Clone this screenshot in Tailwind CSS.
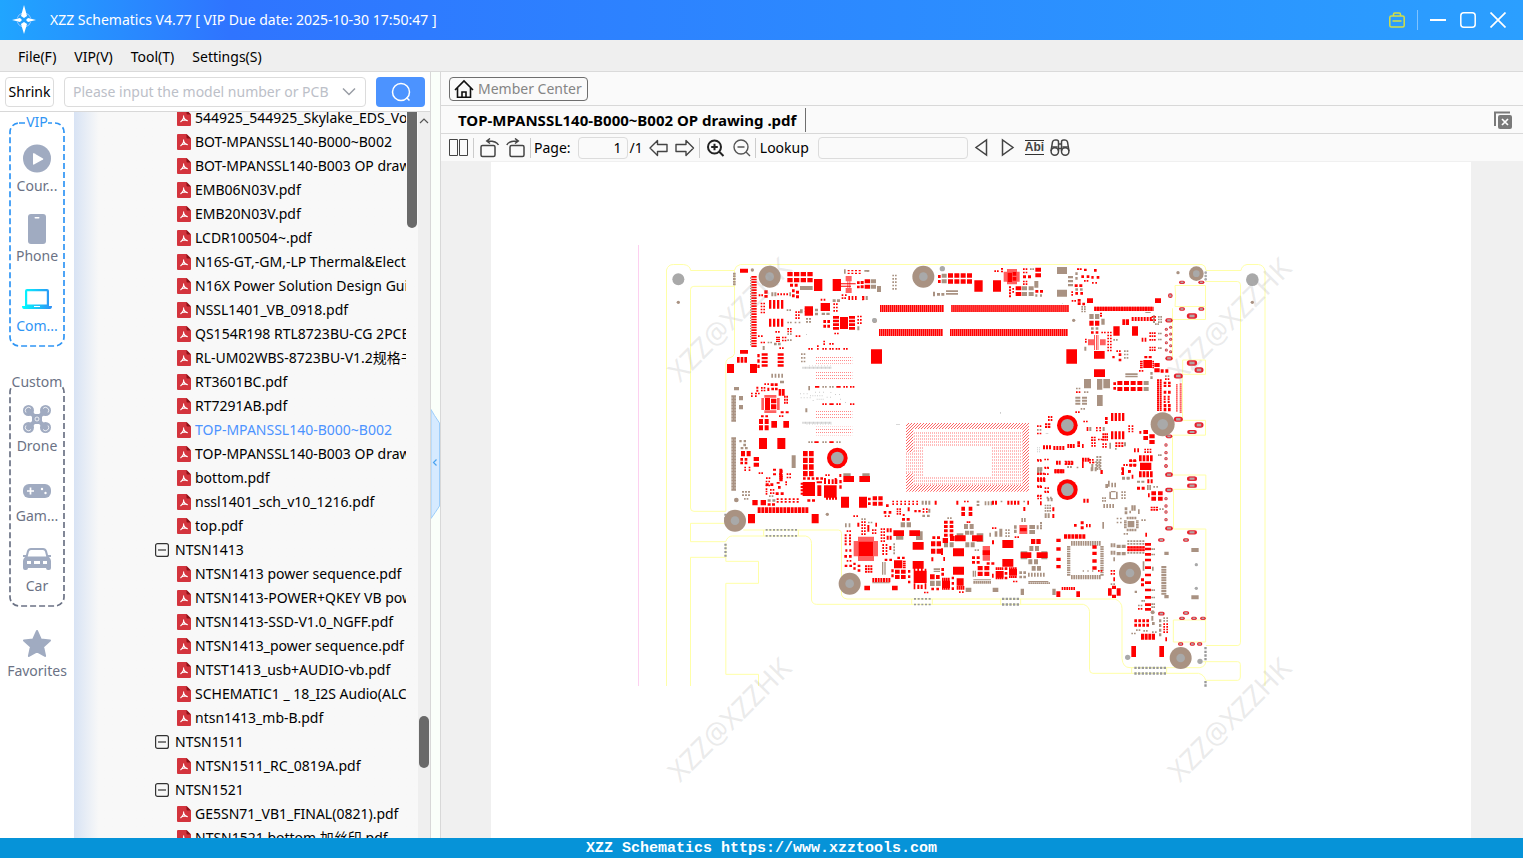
<!DOCTYPE html>
<html lang="en">
<head>
  <meta charset="UTF-8">
  <meta name="viewport" content="width=device-width, initial-scale=1.0">
  <title>XZZ Schematics</title>
  <script src="https://cdn.jsdelivr.net/npm/@tailwindcss/browser@4"></script>
</head>
<body class="h-screen flex flex-col overflow-hidden bg-[#f0f0f0] text-black text-sm leading-5 font-['Noto_Sans','Noto_Sans_CJK_SC',sans-serif]">

  <!-- Title bar -->
  <header class="h-10 shrink-0 flex items-center pl-3 pr-[15px] text-white bg-linear-to-r from-[#20a5ff] via-[#2f74ff] via-15% to-[#2b9fff]">
    <svg class="w-6 h-8" viewBox="0 0 24 32" fill="#fff">
      <circle cx="12" cy="16" r="7" fill="none" stroke="#8fc4ff" stroke-width="1" stroke-dasharray="7 4" stroke-dashoffset="-2"/>
      <path d="M12 1l3 11-3 2-3-2zM12 30l3-10-3-2-3 2zM0 16l8-2 2 2-2 2zM24 16l-8-2-2 2 2 2z"/>
    </svg>
    <h1 class="ml-3.5">XZZ Schematics V4.77 [ VIP Due date: 2025-10-30 17:50:47 ]</h1>
    <div class="ml-auto flex items-center">
      <button aria-label="Toolbox">
        <svg class="w-4 h-4" viewBox="0 0 16 16" fill="none" stroke="#d3df45" stroke-width="1.5"><rect x=".8" y="4" width="14.4" height="11" rx="1.5"/><path d="M4.500 4V2.200Q4.500 1 5.700 1h4.600Q11.500 1 11.500 2.200V4M3.500 9h9"/></svg>
      </button>
      <span class="w-px h-5 bg-white/40 ml-3 mr-3"></span>
      <button aria-label="Minimize"><svg class="w-4 h-4" viewBox="0 0 16 16" stroke="#fff" stroke-width="2"><path d="M0 8h16"/></svg></button>
      <button aria-label="Maximize" class="ml-3.5"><svg class="w-4 h-4" viewBox="0 0 16 16" fill="none" stroke="#fff" stroke-width="1.5"><rect x=".8" y=".8" width="14.400" height="14.400" rx="3"/></svg></button>
      <button aria-label="Close" class="ml-3.5 mr-0.5"><svg class="w-4 h-4" viewBox="0 0 16 16" stroke="#fff" stroke-width="1.700"><path d="M.5.5l15 15M15.500.5l-15 15"/></svg></button>
    </div>
  </header>

  <!-- Menu -->
  <nav class="h-8 shrink-0 flex items-center gap-[18px] px-4.5 pt-0.5 bg-[#efefef] border-b border-[#dadada]">
    <button>File(F)</button>
    <button>VIP(V)</button>
    <button>Tool(T)</button>
    <button>Settings(S)</button>
  </nav>

  <div class="flex-1 min-h-0 flex">

    <!-- Left panel -->
    <aside class="w-[431px] shrink-0 flex flex-col bg-white border-r border-[#d8d8d8]">
      <div class="h-10 shrink-0 flex items-center px-[5px] border-b border-[#d8d8d8]">
        <button class="w-[49px] h-[30px] border border-[#dcdcdc] rounded whitespace-nowrap">Shrink</button>
        <div class="ml-2.5 w-[302px] h-[30px] flex items-center border border-[#dcdcdc] rounded pl-2 pr-2">
          <input aria-label="Model number" class="flex-1 min-w-0 outline-none placeholder:text-[#bcc0c8]" placeholder="Please input the model number or PCB">
          <svg class="w-4 h-4" viewBox="0 0 16 16" fill="none" stroke="#999da5" stroke-width="1.500"><path d="M2 4.500l6 6 6-6"/></svg>
        </div>
        <button aria-label="Search" class="ml-2.5 flex-1 h-[30px] rounded bg-[#4c93ff] flex items-center justify-center">
          <svg class="w-5 h-5" viewBox="0 0 20 20" fill="none" stroke="#fff" stroke-width="1.500"><circle cx="10" cy="10" r="8.500"/><path d="M15.500 15.500l3 3"/></svg>
        </button>
      </div>

      <div class="flex-1 min-h-0 flex">
        <!-- Categories -->
        <div class="w-[74px] shrink-0 pt-2.5 px-[9px] text-[#6b7285]">
          <section class="relative pt-[22px] pb-[11px] flex flex-col gap-[18px]">
            <svg class="absolute inset-0 w-full h-full" fill="none" stroke="#2f95f5" stroke-width="1.700" stroke-dasharray="6 3"><rect x="1" y="1" rx="9" class="w-[calc(100%-2px)] h-[calc(100%-2px)]"/></svg>
            <h2 class="absolute -top-2.5 inset-x-0 flex justify-center text-[#2f95f5]"><span class="bg-white">VIP</span></h2>
            <button class="relative flex flex-col items-center gap-0.5">
              <svg class="w-[30px] h-[30px]" viewBox="0 0 30 30"><circle cx="15" cy="14.500" r="14" fill="#a0abc1"/><path d="M11 9.500v10.500q0 1 1 .5l9-5q.8-.5 0-1l-9-5.300q-1-.5-1 .3z" fill="#fff"/></svg>
              <span>Cour...</span>
            </button>
            <button class="relative flex flex-col items-center gap-0.5">
              <svg class="w-[30px] h-[30px]" viewBox="0 0 30 30"><rect x="6" width="18" height="30" rx="3" fill="#a0abc1"/><rect x="12.500" y="3" width="5" height="1.500" rx=".7" fill="#fff"/></svg>
              <span>Phone</span>
            </button>
            <button class="relative flex flex-col items-center gap-0.5 text-[#2f95f5]">
              <svg class="w-[30px] h-[30px]" viewBox="0 0 30 30"><defs><linearGradient id="lap"><stop stop-color="#0ff"/><stop offset="1" stop-color="#2f8ef5"/></linearGradient></defs><path fill="url(#lap)" fill-rule="evenodd" d="M3 7Q3 5 5 5h20q2 0 2 2v15h3q0 3-2 3H2q-2 0-2-3h3zM5.200 7.200V20.500h19.600V7.200zM12 22v1h6v-1z"/></svg>
              <span>Com...</span>
            </button>
          </section>

          <section class="relative mt-[35px] pt-[22px] pb-[11px] flex flex-col gap-[18px]">
            <svg class="absolute inset-0 w-full h-full" fill="none" stroke="#6b7285" stroke-width="1.700" stroke-dasharray="6 3"><rect x="1" y="1" rx="9" class="w-[calc(100%-2px)] h-[calc(100%-2px)]"/></svg>
            <h2 class="absolute -top-2.5 inset-x-0 flex justify-center"><span class="bg-white">Custom</span></h2>
            <button class="relative flex flex-col items-center gap-0.5">
              <svg class="w-[30px] h-[30px]" viewBox="0 0 30 30">
                <g fill="#a0abc1"><circle cx="6.500" cy="6.500" r="5.500"/><circle cx="23.500" cy="6.500" r="5.500"/><circle cx="6.500" cy="23.500" r="5.500"/><circle cx="23.500" cy="23.500" r="5.500"/><rect x="10" y="10" width="10" height="10" rx="3"/></g>
                <path d="M6 6l18 18M24 6L6 24" stroke="#a0abc1" stroke-width="4"/>
                <g fill="none" stroke="#fff" stroke-width=".8"><circle cx="15" cy="15" r="2"/><path d="M4 8.500A3.200 3.200 0 1 1 9 4.500M21 4.500a3.200 3.200 0 1 1 5 4M4 21.500a3.200 3.200 0 1 0 5 4M26 21.500a3.200 3.200 0 1 1-5 4"/></g>
              </svg>
              <span>Drone</span>
            </button>
            <button class="relative flex flex-col items-center gap-0.5">
              <svg class="w-[30px] h-[30px]" viewBox="0 0 30 30"><rect x="1" y="10" width="28" height="14" rx="6" fill="#a0abc1"/><path d="M5 17h7M8.500 13.500v7" stroke="#fff" stroke-width="1.700"/><circle cx="20" cy="15" r="1.200" fill="#fff"/><circle cx="23.500" cy="19" r="1.200" fill="#fff"/></svg>
              <span>Gam...</span>
            </button>
            <button class="relative flex flex-col items-center gap-0.5">
              <svg class="w-[30px] h-[30px]" viewBox="0 0 30 30"><path fill="#a0abc1" fill-rule="evenodd" d="M9 4h12q3 0 4 3l1 4h3v2h-2q2 2 2 4v7q0 2-2 2h-1q-2 0-2-2H6q0 2-2 2H3q-2 0-2-2v-7q0-2 2-4H1v-2h3l1-4q1-3 4-3zM9 6Q7.500 6 7 7.500L5.700 12.500h18.600L23 7.500Q22.500 6 21 6zM5 17v3h4v-3zM12 17v3h6v-3zM21 17v3h4v-3z"/></svg>
              <span>Car</span>
            </button>
          </section>

          <button class="w-full mt-[22px] flex flex-col items-center gap-0.5">
            <svg class="w-[30px] h-[30px]" viewBox="0 0 30 30"><path fill="#a0abc1" stroke="#a0abc1" stroke-width="2" stroke-linejoin="round" d="M15 2l3.800 8.500 9.200 1-6.900 6.200 2 9.300-8.100-4.700L6.900 27l2-9.300L2 11.500l9.200-1z"/></svg>
            <span>Favorites</span>
          </button>
        </div>

        <!-- File tree -->
        <div class="flex-1 min-w-0 flex overflow-hidden bg-linear-to-r from-[#d8e3f4] to-[#f8f8f8] to-7%">
          <ul id="tree" class="w-[332px] shrink-0 -mt-1.5 overflow-hidden"></ul>
          <div class="w-3 shrink-0 px-px"><div class="h-[116px] rounded-b-full bg-[#696969]"></div></div>
          <div class="flex-1 bg-[#efefef] flex flex-col items-center">
            <svg class="w-3 h-4" viewBox="0 0 12 16" fill="none" stroke="#555" stroke-width="1.200"><path d="M2 11l4-4 4 4"/></svg>
            <div class="flex-1"></div>
            <div class="w-2.5 h-[52px] rounded-full bg-[#696969] mb-[70px]"></div>
          </div>
        </div>
      </div>
    </aside>

    <!-- Splitter -->
    <div class="relative w-2.5 shrink-0 bg-[#fafffa] border-r border-[#d8d8d8]">
      <button aria-label="Collapse panel" class="absolute left-0 top-[337px]">
        <svg class="w-[9px] h-[110px]" viewBox="0 0 9 110"><path d="M0 .5Q3 6 8.500 14v83Q4 104 0 109.500z" fill="#d6eaff" stroke="#9ccdfa"/><path d="M5.500 50.500l-3 3 3 3" fill="none" stroke="#4aa3f0" stroke-width="1.200"/></svg>
      </button>
    </div>

    <!-- Viewer -->
    <main class="flex-1 min-w-0 flex flex-col bg-[#fafafa]">
      <div class="h-[34px] shrink-0 flex items-center px-2 border-b border-[#d8d8d8]">
        <button class="h-6 flex items-center gap-1 pl-1 pr-[5px] border border-[#6e6e6e] rounded text-[#858585]">
          <svg class="w-5 h-5" viewBox="0 0 20 20" fill="none" stroke="#111" stroke-width="1.600"><path d="M1 11L10 2l9 9M3.500 9v9.200h13V9M8 18v-5h4v5"/></svg>
          Member Center
        </button>
      </div>
      <div class="h-7 shrink-0 flex items-center justify-between pl-[17px] pr-2.5 border-b border-[#d8d8d8]">
        <button class="h-6 pr-[9px] border-r border-[#6e6e6e] text-[15px] font-bold">TOP-MPANSSL140-B000~B002 OP drawing .pdf</button>
        <button aria-label="Close all">
          <svg class="w-5 h-5" viewBox="0 0 20 20"><path d="M2 16V2.500h15" fill="none" stroke="#7a7a7a" stroke-width="2"/><rect x="5" y="5" width="14" height="14" rx="2" fill="#7a7a7a"/><path d="M9 9l6 6M15 9l-6 6" stroke="#fff" stroke-width="1.700"/></svg>
        </button>
      </div>
      <div class="h-[27px] shrink-0 flex items-center pl-2">
        <button aria-label="Two pages"><svg class="w-5 h-5" viewBox="0 0 20 20" fill="none" stroke="#444"><path d="M.5 1.500h8v16h-8zM10.500 1.500h8v16h-8z"/></svg></button>
        <span class="w-px h-5 bg-[#ccc] mx-1"></span>
        <button aria-label="Rotate left" class="ml-0.5"><svg class="w-5 h-5" viewBox="0 0 20 20" fill="none" stroke="#444" stroke-width="1.500"><rect x="1" y="7.500" width="14" height="11" rx="1.500"/><path d="M18.500 7Q16 2.500 7 3M10 .5L6.800 3 10 5.500"/></svg></button>
        <button aria-label="Rotate right" class="ml-1.5"><svg class="w-5 h-5" viewBox="0 0 20 20" fill="none" stroke="#444" stroke-width="1.500"><rect x="4" y="7.500" width="14" height="11" rx="1.500"/><path d="M.8 7Q3 2.500 12 3M9 .5L12.300 3 9 5.500"/></svg></button>
        <span class="w-px h-5 bg-[#ccc] ml-1 mr-[3px]"></span>
        <label for="page">Page:</label>
        <input id="page" value="1" class="ml-[7px] w-[50px] h-[22px] border border-[#dcdcdc] rounded-sm text-right px-[5px]">
        <span class="ml-0.5">/1</span>
        <button aria-label="Previous page" class="ml-1.5"><svg class="w-5 h-5" viewBox="0 0 20 20" fill="none" stroke="#444" stroke-width="1.400" stroke-linejoin="round"><path d="M1 10l7.500-7.500v4H18v7H8.500v4z"/></svg></button>
        <button aria-label="Next page" class="ml-1.5"><svg class="w-5 h-5" viewBox="0 0 20 20" fill="none" stroke="#444" stroke-width="1.400" stroke-linejoin="round"><path d="M18.500 10L11 2.500v4H1v7h10v4z"/></svg></button>
        <span class="w-px h-5 bg-[#ccc] ml-1 mr-1.5"></span>
        <button aria-label="Zoom in"><svg class="w-5 h-5" viewBox="0 0 20 20" fill="none" stroke="#222" stroke-width="2"><circle cx="8.500" cy="9" r="6.500"/><path d="M13 13.500l4.500 4.500M5.200 9h6.600M8.500 5.700v6.600"/></svg></button>
        <button aria-label="Zoom out" class="ml-1.5"><svg class="w-5 h-5" viewBox="0 0 20 20" fill="none" stroke="#555" stroke-width="1.400"><circle cx="9" cy="9" r="7"/><path d="M14 14l4 4M5.500 9h7"/></svg></button>
        <span class="w-px h-5 bg-[#ccc] ml-[3px] mr-1"></span>
        <label for="lookup">Lookup</label>
        <input id="lookup" class="ml-[9px] w-[150px] h-[22px] border border-[#dcdcdc] rounded-sm px-1">
        <button aria-label="Find previous" class="ml-1"><svg class="w-5 h-5" viewBox="0 0 20 20" fill="none" stroke="#444" stroke-width="1.500"><path d="M14.500 2v15L4 9.500z"/></svg></button>
        <button aria-label="Find next" class="ml-1.5"><svg class="w-5 h-5" viewBox="0 0 20 20" fill="none" stroke="#444" stroke-width="1.500"><path d="M4.500 2v15L15 9.500z"/></svg></button>
        <button class="ml-[7px] border-y border-[#333] text-xs leading-[13px] font-bold text-[#444] font-['Liberation_Sans',sans-serif]">Abi</button>
        <button aria-label="Search document" class="ml-1.5"><svg class="w-5 h-5" viewBox="0 0 20 20" fill="none" stroke="#444" stroke-width="1.500"><path d="M1 13L2.500 4Q3 2 5 2h1.500Q8.500 2 8.500 4v9M19 13L17.500 4Q17 2 15 2h-1.500Q11.500 2 11.500 4v9M8.500 6h3M8.500 10.500h3M2.500 9h5M12.500 9h5"/><circle cx="4.800" cy="13.500" r="3.700"/><circle cx="15.200" cy="13.500" r="3.700"/></svg></button>
      </div>

      <div class="flex-1 min-h-0 overflow-hidden bg-[#f0f0f0] pt-px pl-[50px] pr-[52px]">
        <div class="h-full max-w-[980px] mx-auto bg-white">
          <svg class="w-full" viewBox="1473 486 2940 2028">
            <defs>
              <pattern id="dotRed" width="9" height="9" patternUnits="userSpaceOnUse"><path fill="#f66" d="M0 0h3v3H0zM6 3h3v3H6zM3 6h3v3H3z"/></pattern>
              <pattern id="dotPale" width="6" height="9" patternUnits="userSpaceOnUse"><path fill="#fbb" d="M0 0h3v6H0z"/></pattern>
              <pattern id="dotRow" width="6" height="9" patternUnits="userSpaceOnUse"><path fill="#f88" d="M0 0h3v3H0z"/></pattern>
            </defs>

            <!-- Board outline -->
            <path d="M1915.500 735V2058" stroke="#fdd0f0" stroke-width="3"/>
            <g fill="none" stroke="#ffffa8" stroke-width="3">
              <g transform="translate(1890 720)">
                <path d="M109.500 1338V90Q114 73.500 130 73.500h30q20 2 22 18h131q3-15 18-18h1385q12 3 12 18h105q2-15 18-18h34q16 2 20 18v1247"/>
                <path d="M313.500 91v250q-3 10-13 12-13 4-13 18v443H192q-10.500 0-10.500-10V149q0-10 10-10h122M181.500 850h106M181.500 850v55h106M181.500 1338V952h106M287.500 910v54h98v66h-98v273h98v35"/>
                <path d="M340 870h285q9 0 9.500 10v185q5 12 16.500 12h804q21 8 21 28v150q2 28 24 28h210q17-4 17-18"/>
                <path d="M287 905q6-17 20-17h220q17 4 17.500 22v170q3 13 15.500 13h800q18 6 18.500 22v173q0 12 10 12h317q17 4 21.500 21h96q8 0 8-10v-38q0-8-8-8h-104M401 870v18M505 870v18M845 1077v17M907 1077v17M1112 1077v17M1172 1077v17M1505 1283v17M1610 1283v17"/>
              </g>
              <g transform="translate(3150 720)">
                <path d="M466 124.500h96q9 0 9.500 10v1072q0 10-8 10h-96M375 136.500h91.500v63h-91.500q4-30 0-63M367.500 238.500h99v-38M367.500 205v155M398 360h68.500v43h-68.500zM397.500 410v131h69v44.500h-99V705h100v43h-97v119h97v273M370 1140h97v66h-97z"/>
              </g>
            </g>

            <g id="board"></g>

            <g fill="#999" fill-opacity=".2" font-size="84" text-anchor="middle" font-family="Noto Sans, sans-serif">
              <text transform="translate(2210 980) rotate(-45)">XZZ@XZZHK</text>
              <text transform="translate(3710 980) rotate(-45)">XZZ@XZZHK</text>
              <text transform="translate(2210 2180) rotate(-45)">XZZ@XZZHK</text>
              <text transform="translate(3710 2180) rotate(-45)">XZZ@XZZHK</text>
            </g>
          </svg>
        </div>
      </div>
    </main>
  </div>

  <!-- Status bar -->
  <footer class="h-5 shrink-0 bg-[#0693d8] text-white text-[15px] leading-[22px] font-bold text-center font-['Liberation_Mono',monospace]">XZZ Schematics https://www.xzztools.com</footer>

  <script>
    // Tree: a leading "-" marks an open folder, "*" the selected file
    const files = [
      '544925_544925_Skylake_EDS_Vol_1.pdf', 'BOT-MPANSSL140-B000~B002', 'BOT-MPANSSL140-B003 OP drawing.pdf',
      'EMB06N03V.pdf', 'EMB20N03V.pdf', 'LCDR100504~.pdf', 'N16S-GT,-GM,-LP Thermal&Electrical.pdf',
      'N16X Power Solution Design Guide.pdf', 'NSSL1401_VB_0918.pdf', 'QS154R198 RTL8723BU-CG 2PCB.pdf',
      'RL-UM02WBS-8723BU-V1.2规格书.pdf', 'RT3601BC.pdf', 'RT7291AB.pdf', '*TOP-MPANSSL140-B000~B002',
      'TOP-MPANSSL140-B003 OP drawing.pdf', 'bottom.pdf', 'nssl1401_sch_v10_1216.pdf', 'top.pdf',
      '-NTSN1413', 'NTSN1413 power sequence.pdf', 'NTSN1413-POWER+QKEY VB power.pdf', 'NTSN1413-SSD-V1.0_NGFF.pdf',
      'NTSN1413_power sequence.pdf', 'NTST1413_usb+AUDIO-vb.pdf', 'SCHEMATIC1 _ 18_I2S Audio(ALC).pdf', 'ntsn1413_mb-B.pdf',
      '-NTSN1511', 'NTSN1511_RC_0819A.pdf', '-NTSN1521', 'GE5SN71_VB1_FINAL(0821).pdf', 'NTSN1521 bottom 加丝印.pdf'
    ];
    const pdfIcon = '<svg class="w-3.5 h-4 shrink-0" viewBox="0 0 14 16"><path fill="#d3343d" d="M1 0h8.500L14 4.500V15q0 1-1 1H1q-1 0-1-1V1q0-1 1-1z"/><path fill="#8d1219" d="M9.500 0L14 4.500H10.500q-1 0-1-1z"/><path fill="none" stroke="#fff" stroke-width="1.100" d="M6.500 5.500q1 3-3 6.500M6.800 7.500q1 3 4 3.300M4 11q3-1.300 5.500-1"/></svg>';
    const boxIcon = '<svg class="w-3.5 h-3.5 shrink-0" viewBox="0 0 14 14" fill="none" stroke="#333" stroke-width="1.200"><rect x=".6" y=".6" width="12.800" height="12.800" rx="2"/><path d="M3 7h8"/></svg>';
    document.getElementById('tree').innerHTML = files.map(name => {
      if (name[0] === '-') {
        return `<li><button class="h-6 pl-[81px] flex items-center gap-1.5 whitespace-nowrap">${boxIcon}${name.slice(1)}</button></li>`;
      }
      if (name[0] === '*') {
        return `<li><button class="h-6 pl-[103px] flex items-center gap-1 whitespace-nowrap text-[#4c93ff]">${pdfIcon}${name.slice(1)}</button></li>`;
      }
      return `<li><button class="h-6 pl-[103px] flex items-center gap-1 whitespace-nowrap">${pdfIcon}${name.replace('&', '&amp;')}</button></li>`;
    }).join('');

    // Board parts, one tile of the board at a time.
    // pads: x y w h [columns dx rows dy]
    const RED = '#f00', TAN = '#a99282', GREY = '#a9a9a9';
    const tiles = [
      { at: [1890, 720],
        red: `330 86 24 12,364 108 16 5 1 0 27 8,472 96 16 13 4 20 2 18,480 131 9 9 2 14,552 117 25 36,608 117 25 36,633 130 44 3,633 137 30 3,
          681 124 8 8,692 123 9 9,681 137 8 8,692 136 9 9,704 118 16 12,704 134 16 12,653 90 6 4 4 11 2 8,386 163 5 6 2 8,403 151 10 10,403 165 10 8,442 160 5 6 4 9,486 148 8 9 1 0 2 15,498 152 9 9 1 0 2 14,
          417 180 7 26 4 12,417 236 7 24 4 12,392 188 5 5 2 8 4 9,524 199 25 28,572 189 28 24,572 176 5 6 2 9,610 190 5 5 2 8 3 10,496 214 5 5 2 8 3 9,609 228 18 8 1 0 4 11,630 231 24 36,657 228 18 8 1 0 4 11,
          580 240 8 9 2 12 2 14,682 227 5 5 2 8 3 10,635 163 5 5 2 10,635 172 5 5 2 8,655 168 5 12 3 10,697 168 6 12,436 273 5 5 2 8,384 286 5 5 2 9,392 305 5 5 2 8,438 290 12 4 1 0 3 6,456 290 5 5 2 8 2 9,497 286 5 5 2 9,
          472 264 5 5 2 8 2 8,448 322 5 5 2 8,613 278 5 5 2 8,330 330 24 11,321 351 8 17 3 11,291 372 21 27,360 372 21 27,382 342 7 10 1 0 3 16,395 340 18 7 1 0 4 11,443 340 18 7 1 0 4 11,
          535 324 5 5 2 8,561 316 5 5 1 0 2 8,580 302 5 5 1 0 2 8,598 309 5 5 2 8,577 324 5 5 2 8,598 324 5 5 2 8,617 324 5 5 2 8,640 324 5 5 2 8,555 438 13 5,619 438 13 5,640 438 5 5 2 8,660 438 5 5 2 8,
          577 490 5 5 2 8,598 490 13 5,619 490 5 5 2 8,660 490 5 5 2 8,553 604 13 5,598 604 13 5,405 474 15 36,423 476 16 14,423 493 16 15,
          403 430 5 5 2 9,422 430 9 8 2 12,393 441 5 5 2 8 2 8,412 443 6 10,424 443 8 8 2 11,446 447 8 10 2 10 2 10,379 440 6 6 1 0 2 9,363 458 5 5 2 12 2 8,376 458 5 5 2 8,462 467 5 6 2 7 3 9,
          387 537 12 15 2 17 2 19,424 543 17 20,460 543 17 20,393 526 8 6 2 13,452 514 9 6 2 15,447 526 5 5 2 8,387 594 24 33,442 594 24 33,519 633 14 16 2 18 4 20,333 633 12 16 2 17,371 651 16 12 1 0 2 17,
          331 654 8 8 2 13 2 11,343 680 5 5 2 13 2 8,386 697 5 5 2 8,429 686 9 6 2 19,429 700 9 6 2 18,448 690 10 10 1 0 3 12,470 700 5 5 2 8 2 10,408 712 5 5 2 8,407 722 5 5 2 8 2 12,586 703 5 5 2 8,628 702 6 9`,
        pale: `647 108 18 16,647 144 18 15,652 124 3 20,658 124 3 20,403 465 36 8,394 474 8 36,441 474 8 36,403 511 36 8,524 205 25 3,524 213 25 3`,
        tan: `703 90 5 5 2 8,722 118 16 12,722 134 16 12,741 138 12 18,510 138 38 12,309 98 8 6 1 0 5 8,642 88 5 13,424 157 6 12 2 9,478 157 5 12,510 208 8 12,555 206 9 8 1 0 2 12,575 218 10 7 2 14,528 234 6 5 2 9 2 9,
          608 178 9 8 2 13,682 259 6 12,708 168 5 12,472 245 5 5 2 8,494 245 5 5 2 12,472 280 5 5 2 8 2 18,413 305 5 5 2 8,432 308 8 8 2 12,398 318 6 12,470 208 5 5 2 8,360 112 4 4 1 0 26 8,
          424 401 5 12 4 10,513 340 5 5 2 8 3 11,535 438 5 13,577 438 5 5 2 8,598 438 5 5 2 8,535 604 5 5 2 8,577 604 5 5 2 8,619 604 5 5 2 8,450 422 12 8,526 505 6 12,312 441 15 10,304 466 14 7 1 0 9 9,309 473 4 70,304 592 14 7 1 0 18 9,309 592 4 155,327 468 12 13 1 0 2 27,485 646 12 38,328 600 7 7 2 13 1 0,340 611 8 8,332 621 8 7 2 13`,
        dust: `517 380 3 6 22 4,538 376 2 3 8 9,517 545 3 6 22 4,530 551 2 3 10 8,510 460 3 3 3 10,540 466 3 3 6 7,555 455 3 3 3 12,560 476 3 3 4 6,590 470 3 3 2 10,615 462 3 3 2 12,630 476 3 3,645 486 3 3,601 456 3 3,512 472 3 3 4 9,548 480 3 3,528 282 3 3`,
        rows: [[555, 346, 112, 25], [555, 396, 112, 24], [555, 512, 112, 24], [555, 560, 112, 26]],
        holes: [[419, 110, 33, TAN, 13], [145, 118, 18, GREY], [145, 187, 5, TAN], [367, 90, 5, TAN], [622, 654, 31, RED, 19], [734, 242, 7, TAN]] },

      { at: [2580, 720],
        pale: `60 195 192 21,274 195 353 21,57 267 192 21,270 267 354 21,441 87 30 46,431 95 48 30`,
        red: `234 105 8 9,234 120 8 9,264 100 15 13 4 19 2 18,343 121 25 34,399 121 24 34,60 195 3 21 32 6,274 195 3 21 59 6,57 267 3 21 32 6,270 267 3 21 59 6,33 328 33 43,
          443 98 13 28,458 96 11 11,458 111 11 11,403 91 5 5 2 8,423 84 6 5 1 0 2 8,489 85 5 5 2 8 2 10,489 106 9 9 2 15,489 122 5 5 2 8 2 8,526 83 17 12 1 0 2 17,467 139 17 12 1 0 2 17,447 139 6 6 1 0 4 9,457 144 5 5 1 0 2 9,526 150 9 8 2 14,
          6 168 5 5 1 0 2 8,531 556 5 5 2 8,531 578 5 5 2 8,564 528 5 6 2 8 2 9,555 550 7 6 2 9 2 8,531 657 5 5 2 8,553 656 5 5 2 8,531 700 5 5 2 8,553 680 5 5 2 8,531 712 6 12 3 9,553 700 5 5 2 8,531 736 5 5 2 8,553 752 5 5 2 8,549 616 6 12 3 9,531 766 5 5 2 8`,
        tan: `245 101 15 12 1 0 2 17,258 151 36 5,258 159 36 5,219 155 6 14,231 159 9 8 2 13,97 104 5 5 2 8 5 10,486 139 15 12 2 20 2 17,523 123 12 20,510 85 5 5 2 7,526 163 6 7 2 14,17 168 5 12,18 90 5 5 2 5,531 567 5 5 2 8,531 682 6 18 2 8,560 770 5 6 2 10`,
        dust: `108 552 12 2,420 516 3 5,531 622 3 3 2 6 3 6,557 580 8 2,606 190 3 2`,
        dense: [[138, 549, 369, 18], [138, 735, 369, 20], [138, 567, 22, 70], [138, 700, 22, 35], [487, 567, 20, 168]],
        faint: [[160, 576, 327, 34], [138, 637, 22, 63], [160, 610, 32, 125], [396, 610, 91, 125], [192, 709, 204, 26], [192, 610, 204, 8]],
        holes: [[190, 110, 33, TAN, 13], [247, 86, 8, GREY], [43, 241, 7, GREY], [641, 241, 5, TAN], [622, 556, 31, RED, 19], [622, 749, 31, RED, 19]] },

      { at: [3150, 720],
        pale: `132 200 180 13,378 432 5 5 1 0 14 6,389 430 6 5 1 0 15 6,114 298 18 18,150 298 17 18`,
        red: `49 328 32 43,81 85 6 5 2 8,102 86 8 7,132 87 8 8,94 106 8 8,110 106 8 8,124 108 7 8,140 108 8 8,102 120 5 5 2 8,126 126 5 5 2 10,74 133 9 8 2 14,64 154 5 5 1 0 2 8,76 156 8 8 2 15,65 180 5 5 2 8,83 177 9 8 1 0 2 10,97 188 8 8,
          111 175 18 14,315 175 18 14,133 200 6 13 22 8,118 242 13 15 2 17,190 259 19 28,246 259 18 28,217 238 9 17 2 11,245 231 6 12 7 9,150 218 6 5 1 0 2 7,123 274 8 7 2 14,154 275 5 5 2 8,172 275 5 5 2 8 2 9,
          133 285 2 45,138 285 2 45,143 285 2 45,172 293 5 5 2 8 5 9,105 296 5 5 1 0 2 7,275 293 5 12 2 9,298 277 5 5 3 7 2 9,298 297 5 5 3 7,298 320 5 5 3 7 2 8,305 228 5 5 2 8 2 10,132 333 32 23,132 388 33 23,280 360 26 24,270 362 8 5 1 0 4 6,307 362 5 5 1 0 4 6,
          283 348 9 7 2 13,313 369 16 12 1 0 2 16,332 388 9 10 2 14,267 390 5 5 2 8,187 348 7 7,206 340 8 8 1 0 2 16,199 331 5 5 2 8,78 454 5 5 2 8,202 423 15 12 4 20 2 18,190 427 8 8 1 0 2 14,321 418 6 5 2 8 16 6,341 425 8 7 2 13 2 9,341 452 8 9 2 13,341 467 6 6 2 12 3 8,341 492 8 10 2 13 2 12,345 415 5 5 2 8,
          76 514 5 5 2 8,100 542 5 5 2 8,165 531 8 9 1 0 2 12,183 519 7 24 4 11,183 574 7 24 4 11,235 556 5 5 2 10 3 8,110 561 5 12,138 561 5 5 2 10 2 8,123 590 6 5 2 8 2 8,144 596 5 5 2 8,157 580 5 6 3 6 3 8,10 618 6 12 4 9,52 612 6 12 3 8,82 604 8 8 1 0 2 9,96 612 5 12,
          124 607 5 5 2 8 2 8,157 610 5 5 2 8 2 8,196 607 6 6 3 9 2 8,280 570 14 12 1 0 2 18,298 583 16 12 1 0 2 17,268 573 6 8,252 625 5 12 2 10,283 626 5 5 3 8 2 8,18 662 6 12 2 8,44 662 6 5 3 9 2 8,96 653 6 12 3 8,118 657 5 5 2 8 2 8,13 688 6 12 4 8,238 658 8 8 2 12 2 14,220 672 5 6 2 8,216 684 6 12,234 690 8 8,152 690 5 12,
          267 646 8 18 4 11,270 668 34 22,267 694 8 18 4 11`,
        tan: `21 81 30 21,21 149 30 21,54 108 15 7 1 0 3 12,76 97 7 8 1 0 2 14,76 145 8 7 2 14,118 222 13 15 2 17,154 236 10 18,123 262 8 7 2 14,94 198 5 5 2 8 3 7,190 297 5 5 2 8,222 331 5 5 2 8 3 10,103 320 6 12,286 216 16 3,309 226 6 7 1 0 3 8,324 228 5 5 2 7 3 8,315 250 5 5 2 7,324 278 5 5 2 6,324 296 5 5 2 6,324 322 5 5 2 6,
          102 417 21 28,141 417 16 32,160 417 20 28,141 465 17 33,226 400 37 5,226 407 37 5,76 470 15 6 1 0 3 9,96 470 15 6 1 0 3 9,78 443 5 5 2 8,102 454 5 5 2 8,92 504 5 5 2 8,281 423 15 12 1 0 2 18,301 396 7 8 1 0 2 13,345 406 5 5 2 8,
          118 561 6 12,158 561 6 12,178 608 5 18,222 607 6 12,195 624 5 5,139 648 6 6 2 9 5 9,80 680 5 5,52 679 5 5 2 8,124 672 6 20,216 712 9 7 2 14,324 643 5 5 2 6`,
        ovals: [[396, 127, 18, 10], [454, 127, 18, 10], [396, 207, 18, 10], [454, 207, 18, 10], [426, 228, 31, 16], [357, 241, 22, 13], [361, 167, 14, 14], [357, 355, 22, 13], [426, 369, 31, 16], [447, 390, 27, 16], [385, 408, 27, 15], [385, 538, 27, 15], [447, 555, 27, 16], [426, 576, 29, 12], [357, 589, 20, 11], [357, 703, 20, 11], [426, 716, 29, 12],
          [362, 262, 9, 9], [349, 268, 9, 9], [362, 282, 9, 9], [349, 286, 9, 9], [362, 298, 9, 9], [349, 308, 9, 9], [362, 317, 9, 9], [349, 330, 9, 9], [362, 335, 9, 9], [348, 615, 10, 10], [348, 638, 10, 10], [348, 656, 10, 10], [348, 678, 10, 10]],
        holes: [[338, 553, 36, TAN, 16], [439, 101, 22, TAN, 10], [607, 119, 19, GREY], [607, 187, 5, TAN], [384, 98, 5, TAN], [467, 98, 4, GREY], [467, 108, 4, GREY], [467, 118, 4, GREY]] },

      { at: [1890, 1320],
        pale: `684 290 48 73,671 303 73 46`,
        red: `518 126 37 42,512 128 6 6 1 0 4 10,560 124 16 6,562 136 12 32,582 136 38 37,582 114 6 18,594 118 6 14 3 11,614 114 6 18,588 172 6 7 4 9,640 108 32 18,688 108 32 18,633 170 24 33,687 170 24 33,714 173 8 8 1 0 2 14,728 169 13 12 2 17 2 16,
          519 112 8 7 5 13,383 202 9 17 14 11,354 222 21 28,545 222 21 28,367 180 16 16 2 25,440 175 6 5 6 12 2 8,413 190 9 7 2 13,532 178 9 7 2 14,407 130 9 8 2 14,407 145 5 5 1 0 3 7,420 147 5 5 2 8 2 10,440 126 9 5,448 108 10 8,444 138 8 8,437 157 9 8 2 15,466 124 5 5 1 0 2 7,628 120 7 10 1 0 2 16,
          686 305 43 43,768 193 8 8,761 213 8 8,776 213 8 8,764 226 5 5 2 10,787 182 5 5 7 12 2 8,914 182 6 12,800 205 5 5 2 8 3 7,833 202 6 12,818 222 6 6,853 210 7 7 2 12,878 205 5 5 2 10 2 8,816 234 9 8 2 14,
          670 226 5 5 2 9,650 271 5 5 2 8,644 283 6 6 2 13 4 9,646 328 6 7 2 12,643 345 8 8 2 14,650 360 5 5 2 9,644 374 8 7 2 14,682 248 6 12,694 244 5 5 2 8 5 9,712 255 6 20,726 268 5 5 2 8 2 9,736 248 5 12,752 265 5 5 2 8 5 9,770 265 6 12 2 9 2 22,757 312 5 6 2 10 4 9,778 318 6 12,764 356 8 7 2 14,
          670 368 7 7 1 0 2 14,683 374 8 7 1 0 2 14,705 376 6 6 3 8 3 8,790 271 32 17,838 271 32 17,848 306 33 23,848 363 33 23,903 304 13 15 2 17 2 22,907 289 9 8 2 14,792 361 25 24,802 350 8 7 2 14,819 362 8 5 1 0 4 6,795 389 14 12 2 18 2 16,784 388 7 9 1 0 2 15,
          851 392 39 37,851 386 5 6 4 11,851 430 5 18,862 434 6 13 2 10,884 430 5 18,834 390 7 8 1 0 3 16,900 403 14 15,918 405 11 12,904 443 8 8 2 15,882 455 5 5 2 8,727 414 6 13 7 8,703 437 17 14,786 437 17 14,904 352 6 12`,
        tan: `640 100 22 8,697 100 22 8,336 153 6 5 3 9 2 10,342 174 5 5 2 8,413 178 9 7 2 14,417 166 5 5 2 8,694 235 5 5 2 8,714 245 5 5 2 8,645 250 5 12 2 11,790 310 5 6 1 0 4 9,812 247 13 15 2 18,798 288 22 11,870 274 8 26,858 288 20 12,875 182 6 12 3 10,895 206 6 12,877 224 8 7 2 14,
          756 366 4 38,763 366 4 38,727 427 52 3,911 385 19 5,911 392 19 4,900 422 14 16 2 18`,
        dots: `407 267 6 5 9 11 2 18,283 311 7 6 1 0 4 11,283 221 7 6 1 0 3 10,852 474 6 5 5 11 2 17`,
        holes: [[315, 242, 33, TAN, 13], [659, 431, 33, TAN, 13], [592, 223, 5, TAN], [319, 180, 7, TAN]] },

      { at: [2820, 1380],
        pale: `238 195 24 27,128 258 22 44,562 259 52 14`,
        red: `3 265 6 20,8 234 16 15,12 182 11 9 2 17 4 13,30 228 14 15,45 226 32 18,96 226 32 18,80 184 5 5 2 6,49 122 6 12,72 122 5 5 2 9,64 140 11 12 2 22 2 16,156 122 6 12 2 9,202 122 6 12 4 10,250 141 6 12,262 122 5 12,39 265 33 24,39 320 33 24,187 240 33 24,187 297 33 23,10 291 5 12,4 324 8 9 1 0 2 14,
          6 362 24 22,6 353 5 9 4 6,6 384 5 5 4 6,50 355 21 22,50 378 5 11 4 6,35 350 7 8 1 0 3 16,57 394 5 5 2 9,96 289 9 8 2 14 2 14,128 271 22 14,113 318 15 13 2 20 2 17,140 307 9 7 2 14,156 202 5 5 2 8,156 241 6 12,167 333 24 20,167 322 5 8 4 6,167 353 5 5 4 6,194 322 8 8 1 0 3 14,
          207 327 24 20,207 322 5 5 4 6,207 348 5 6 4 6,219 362 5 5 2 8,156 341 5 12,240 204 20 10,224 229 5 5 2 8,273 237 13 15 2 16,242 277 32 17,290 277 33 17,292 0 5 5 2 8,292 38 6 6 3 8,314 22 5 5 2 8,292 54 6 12 3 9,292 78 6 6 2 8,314 82 5 5 2 8 2 12,292 104 5 5 2 8 2 9,337 142 6 12 1 0 2 20,300 124 5 12,
          344 28 6 12 3 9,376 4 6 10 3 9,430 116 6 12 2 10,402 192 8 8,422 184 9 9 1 0 2 15,438 192 5 10 2 9,426 4 5 20,482 30 6 12,448 5 5 5 2 10,372 223 9 13 6 11,349 236 13 10,349 262 13 10,349 293 13 10,349 315 13 10,457 256 13 10,457 275 13 10,457 298 13 10,457 319 13 10,474 330 5 5 2 8,512 330 5 5 2 8 2 9,520 352 5 12,
          504 385 11 22,530 385 12 22,516 377 12 10,516 404 12 10,365 381 5 9 6 7,349 394 12 17,409 394 11 17,562 259 7 6 6 9 2 9,615 249 18 8,615 263 18 8,615 279 18 8,615 296 18 8,615 319 18 8,615 341 18 8,615 364 18 8,615 386 18 8,615 408 18 8,615 430 18 8,615 444 18 8,603 355 9 9 1 0 2 15,616 218 5 12,594 444 5 5 2 8,
          591 80 9 9 2 14,622 58 6 12 2 10,544 22 8 9 1 0 2 14,564 30 8 8,575 44 5 12,568 0 9 6 2 12,568 11 9 8 2 12,634 94 14 12 2 20 2 16,624 100 5 12,632 140 6 5 3 8 2 7,583 478 8 9 4 12 2 13,603 521 9 18 4 11,574 558 14 33,658 558 14 33,670 490 5 5 2 9 4 8,676 532 5 12`,
        tan: `314 134 5 5 3 7 3 8,314 160 6 14 2 9,322 114 6 10 2 10,294 22 5 12 2 8,382 18 5 5 2 8,452 22 6 12 2 12,466 4 6 5 2 9 3 8,110 122 8 6 1 0 2 10,134 124 5 12 3 9,182 122 5 5,250 122 5 5,22 172 5 5 2 8,12 247 12 15 2 17,72 192 12 15 2 17,75 212 12 12 2 14,76 247 12 15 2 16,110 220 20 26,50 220 20 8,104 268 5 5 2 8,
          148 218 5 12,164 214 8 16,178 206 9 24,196 208 5 5 2 8 3 9,244 174 5 12 2 8,222 196 8 10 1 0 2 13,268 195 17 12 1 0 2 15,290 196 6 12,300 186 6 6 1 0 3 8,268 258 12 15 2 17,242 274 20 24,304 274 18 24,265 298 12 15 2 17,275 318 12 14 2 16,238 334 8 8 2 12 2 13,264 338 5 12 6 9,98 332 4 18,104 332 4 18,100 358 53 3,100 363 5 8 9 6,265 363 60 3,265 367 5 5 11 6,
          242 386 10 19,337 386 10 19,77 383 17 13,158 383 17 13,393 243 5 14 13 7,393 345 5 13 13 7,381 258 10 5 1 0 13 7,481 258 10 5 1 0 13 7,428 331 4 4 3 14,486 112 5 5 2 7 2 8,490 132 5 12 4 9,544 94 5 5 2 8 3 9,496 72 8 6 1 0 2 6,514 68 5 14 2 9,504 62 5 18,508 95 5 22,528 95 5 22,513 93 14 4,513 114 14 4,
          563 183 20 19,560 170 4 8 6 5,560 206 4 8 6 5,552 181 8 4 1 0 5 5,588 181 8 4 1 0 5 5,554 142 8 9 1 0 2 12,574 136 6 16 2 7,568 152 5 8,594 148 5 14,530 173 5 5 2 10 2 12,604 178 5 5 2 8,551 219 5 5 2 8,487 186 5 20,546 50 9 6 2 14,591 62 9 6 2 13,621 75 5 15,628 75 5 15,640 78 5 5 2 9,658 145 5 5 2 8,512 250 6 12 2 8 2 22,530 254 12 10 2 15 2 22,520 292 5 12,
          562 241 6 5 6 9,562 249 6 5 6 9,562 276 6 5 6 9,608 304 5 28,636 320 5 12,634 265 5 5 2 6,634 281 5 5 2 6,634 388 5 5 2 6,634 410 5 5 2 6,634 430 5 5 2 6 2 9,584 392 7 7,594 434 5 5 2 8,604 420 5 5 2 6,664 318 15 6 1 0 11 8,754 264 22 12,754 406 22 12,673 275 13 10,673 405 13 10,512 370 5 5 2 8,
          634 468 6 14,636 486 8 9,657 478 7 9 1 0 4 14,670 472 5 5 2 9 2 8,588 508 5 5 2 8,610 510 5 5 2 8,574 518 5 5 2 8,636 514 5 5 2 9`,
        dots: `583 620 7 7 9 11 2 17,186 413 7 7 5 11 2 17,793 561 7 7 1 0 4 11,793 663 7 7 1 0 2 10`,
        ovals: [[664, 240, 20, 11], [738, 240, 18, 10], [738, 459, 19, 11], [664, 461, 20, 11], [726, 475, 17, 10], [762, 475, 17, 10], [789, 475, 17, 10], [722, 552, 16, 10], [757, 552, 16, 10], [779, 552, 16, 10], [756, 56, 30, 13], [756, 77, 30, 13], [756, 217, 30, 13], [687, 44, 23, 13], [687, 90, 23, 13], [687, 205, 23, 13], [678, 18, 10, 10], [678, 116, 10, 10], [678, 138, 10, 10], [678, 156, 10, 10], [678, 179, 10, 10]],
        holes: [[570, 339, 33, TAN, 13], [722, 594, 33, TAN, 13], [563, 592, 8, GREY], [780, 604, 8, GREY], [638, 457, 6, TAN], [769, 314, 5, GREY], [769, 385, 5, GREY]] }
    ];

    function pads(list, color) {
      if (!list) return '';
      let d = '';
      list.split(',').forEach(item => {
        const [x, y, w, h, cols = 1, dx = 0, rows = 1, dy = 0] = item.trim().split(' ').map(Number);
        for (let r = 0; r < rows; r++) {
          for (let c = 0; c < cols; c++) d += `M${x + c * dx} ${y + r * dy}h${w}v${h}h${-w}z`;
        }
      });
      return `<path fill="${color}" d="${d}"/>`;
    }

    function fills(list = [], id) {
      return list.map(([x, y, w, h]) => `<rect x="${x}" y="${y}" width="${w}" height="${h}" fill="url(#${id})"/>`).join('');
    }

    function draw(t) {
      const ovals = (t.ovals || []).map(([x, y, w, h]) =>
        `<rect x="${x - w / 2}" y="${y - h / 2}" width="${w}" height="${h}" rx="${h / 2}" fill="#e8202c"/>` +
        `<rect x="${x - w / 4}" y="${y - h / 4}" width="${w / 2}" height="${h / 2}" fill="#b5a5a5"/>`).join('');
      const holes = t.holes.map(([x, y, r, color, inner]) =>
        `<circle cx="${x}" cy="${y}" r="${r}" fill="${color}"/>` + (inner ? `<circle cx="${x}" cy="${y}" r="${inner}" fill="${GREY}"/>` : '')).join('');
      return `<g transform="translate(${t.at})">` + pads(t.tan, TAN) + pads(t.dots, '#999') + pads(t.dust, '#ccc') +
        pads(t.pale, '#ff6060') + pads(t.red, RED) + fills(t.rows, 'dotRow') + fills(t.dense, 'dotRed') + fills(t.faint, 'dotPale') +
        ovals + holes + '</g>';
    }

    document.getElementById('board').innerHTML = tiles.map(draw).join('');
  </script>
</body>
</html>
